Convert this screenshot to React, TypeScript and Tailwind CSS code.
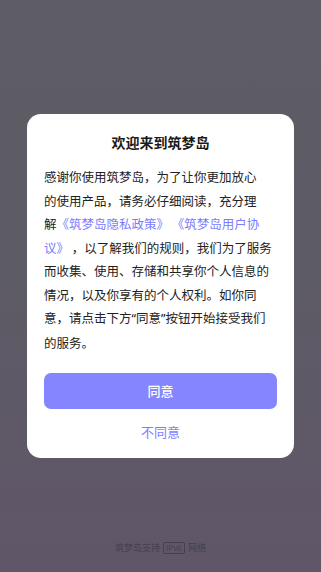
import * as React from "react";

const font = { fontFamily: '"Noto Sans CJK SC", "Noto Sans", sans-serif' };

function Q({ children }: { children: React.ReactNode }) {
  return <span className="font-['Noto_Sans']">{children}</span>;
}

export default function App() {
  return (
    <div
      className="relative flex h-[572px] w-[321px] flex-col items-center justify-center bg-gradient-to-b from-[#5e5d65] via-[#5d5b66] to-[#605668]"
      style={font}
    >
      <div className="flex w-[267px] flex-col rounded-[14px] bg-white px-[17px] pt-[18px] pb-[14px]">
        <h1 className="text-center text-[14px] font-bold leading-[20px] text-[#1a1a1a]">欢迎来到筑梦岛</h1>
        <p className="mt-[13px] whitespace-nowrap text-[12.5px] leading-[23.5px] text-[#222]">
          感谢你使用筑梦岛，为了让你更加放心
          <br />
          的使用产品，请务必仔细阅读，充分理
          <br />
          解<span className="text-[#7b7bff]">《筑梦岛隐私政策》 《筑梦岛用户协</span>
          <br />
          <span className="text-[#7b7bff]">议》</span> ，以了解我们的规则，我们为了服务
          <br />
          而收集、使用、存储和共享你个人信息的
          <br />
          情况，以及你享有的个人权利。如你同
          <br />
          意，请点击下方<Q>“</Q>同意<Q>”</Q>按钮开始接受我们
          <br />
          的服务。
        </p>
        <button className="mt-[19px] h-[36px] w-full rounded-[7px] bg-[#8485ff] text-[13px] font-medium text-white">
          同意
        </button>
        <button className="mt-[11px] h-[24px] w-full text-[13px] text-[#7d7dff]">不同意</button>
      </div>
      <div className="absolute bottom-[18px] left-0 right-0 flex items-center justify-center gap-[3px] text-[9px] leading-[12px] text-[#45404d]">
        <span>筑梦岛支持</span>
        <span className="rounded-[2px] border border-[#45404d] px-[2px] text-[8px] leading-[10px]">IPv6</span>
        <span>网络</span>
      </div>
    </div>
  );
}
